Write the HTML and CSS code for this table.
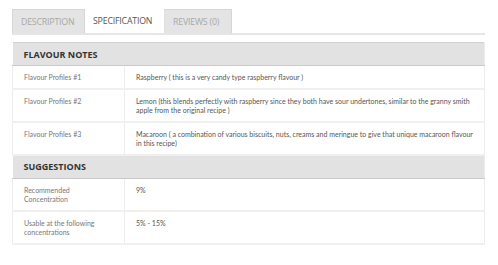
FILE: index.html
```html
<!DOCTYPE html>
<html>
<head>
<meta charset="utf-8">
<link rel="stylesheet" href="styles.css">
</head>
<body>
<div class="page">
  <div class="tabs">
    <div class="tab">DESCRIPTION</div>
    <div class="tab active">SPECIFICATION</div>
    <div class="tab">REVIEWS (0)</div>
  </div>
  <table class="spec">
    <tr class="head"><th colspan="2">FLAVOUR NOTES</th></tr>
    <tr><td class="label">Flavour Profiles #1</td><td>Raspberry ( this is a very candy type raspberry flavour )</td></tr>
    <tr><td class="label">Flavour Profiles #2</td><td>Lemon (this blends perfectly with raspberry since they both have sour undertones, similar to the granny smith apple from the original recipe )</td></tr>
    <tr><td class="label">Flavour Profiles #3</td><td>Macaroon ( a combination of various biscuits, nuts, creams and meringue to give that unique macaroon flavour in this recipe)</td></tr>
    <tr class="head"><th colspan="2">SUGGESTIONS</th></tr>
    <tr><td class="label">Recommended Concentration</td><td>9%</td></tr>
    <tr><td class="label">Usable at the following concentrations</td><td>5% - 15%</td></tr>
  </table>
</div>
</body>
</html>
```
FILE: styles.css
```css
html, body {
  margin: 0;
  padding: 0;
  background: #fff;
}
.page {
  padding: 9px 13px 0 12px;
}
.tabs {
  display: flex;
  border-bottom: 2px solid #e6e6e6;
  height: 24px;
}
.tab {
  box-sizing: border-box;
  height: 24px;
  border: 1px solid #d6d6d6;
  border-bottom: none;
  background: #e4e4e4;
  color: #a8a8a8;
  font-family: "Open Sans", sans-serif;
  font-size: 8.8px;
  letter-spacing: -0.2px;
  display: flex;
  align-items: center;
  padding: 0 0 0 8px;
}
.tab:first-child { width: 73px; }
.tab.active {
  width: 80px;
  background: #fff;
  color: #555;
  border-top: none;
  border-left: none;
  border-right: 1px solid #e0e0e0;
}
.tab:last-child { width: 67px; border-left: none; }
.spec {
  margin-top: 7px;
  width: 473px;
  border-collapse: collapse;
  font-family: Lato, sans-serif;
  font-size: 7px;
  color: #555;
}
.spec th {
  text-align: left;
  background: #e2e2e2;
  border-top: 1px solid #d2d2d2;
  border-bottom: 1px solid #c9c9c9;
  height: 22px;
  padding: 0 0 0 11px;
  font-family: "Open Sans", sans-serif;
  font-weight: 700;
  font-size: 9px;
  color: #333;
  border-right: 1px solid #ececec;
}
.spec td {
  vertical-align: top;
  line-height: 9.5px;
  padding: 7px 10px 5px 11px;
  border-bottom: 2px solid #f0f0f0;
  border-left: 1px solid #ececec;
  border-right: 1px solid #ececec;
}
.spec td.label {
  width: 90px;
  color: #777;
}
```
